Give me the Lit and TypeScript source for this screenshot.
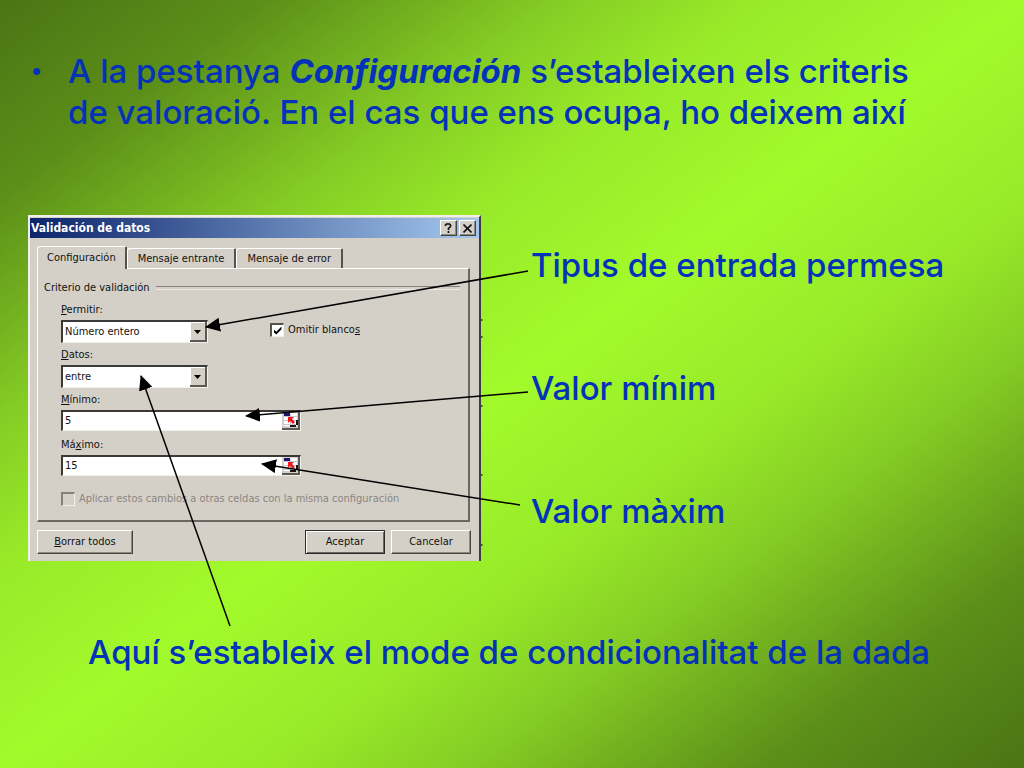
import { LitElement, html, css, svg } from "lit";
import { customElement, property } from "lit/decorators.js";

/** Arrows from the notes to the dialog, measured from the dialog's top left corner. */
const ARROWS = [
  { from: [500, 56], to: [178, 112] },
  { from: [500, 177], to: [218, 201] },
  { from: [492, 290], to: [234, 249] },
  { from: [202, 411], to: [113, 161] },
];

/** Cell marks of the worksheet that show beside the dialog. */
const CELL_MARKS = [105, 122, 191, 260, 330];

@customElement("validation-dialog")
export class ValidationDialog extends LitElement {
  @property() minimum = "5";
  @property() maximum = "15";

  static styles = css`
    :host {
      display: block;
      font: 11px/14px "DejaVu Sans Condensed", "Tahoma", sans-serif;
      color: #111;
    }
    * {
      box-sizing: border-box;
    }
    .dialog {
      background: #d4d0c8;
      border: solid;
      border-width: 2px 2px 0;
      border-color: #f1efea #3c3c46 #f1efea #f1efea;
      padding-bottom: 7px;
    }
    .titlebar {
      display: flex;
      align-items: center;
      gap: 2px;
      height: 20px;
      margin-top: 1px;
      padding: 0 3px 0 1px;
      background: linear-gradient(to right, #0c256c, #a4c8ee);
      color: #fff;
    }
    .title {
      flex: 1;
      margin: 0;
      font: bold 12px/14px "DejaVu Sans Condensed", "Tahoma", sans-serif;
    }
    button {
      font: inherit;
      color: inherit;
      padding: 0;
      background: #d4d0c8;
      border: 1px solid;
      border-color: #fff #484440 #484440 #fff;
      box-shadow: inset -1px -1px #8c8882;
    }
    .caption-button {
      display: grid;
      place-items: center;
      width: 17px;
      height: 16px;
    }
    .tabs {
      display: flex;
      align-items: flex-end;
      padding: 8px 7px 0;
    }
    .tab {
      height: 20px;
      padding: 0 10px;
      border-width: 1px 2px 0 1px;
      border-color: #fff #56524e #fff #fff;
      border-radius: 3px 2px 0 0;
      box-shadow: none;
      white-space: nowrap;
    }
    .tab.active {
      height: 23px;
      margin-bottom: -1px;
      padding: 0 9px;
      position: relative;
      z-index: 1;
    }
    .panel {
      margin: 0 9px 0 7px;
      padding: 12px 8px 14px 6px;
      border: solid;
      border-width: 1px 2px 2px 1px;
      border-color: #fff #6a6662 #6a6662 #fff;
    }
    .group {
      margin: 0;
      font: inherit;
      display: flex;
      align-items: center;
      gap: 6px;
    }
    .group::after {
      content: "";
      flex: 1;
      height: 2px;
      border-top: 1px solid #84807a;
      border-bottom: 1px solid #eceae4;
    }
    .fields {
      display: grid;
      grid-template-columns: 209px 1fr;
      padding: 8px 0 0 17px;
    }
    .field {
      display: flex;
      flex-direction: column;
      gap: 3px;
      height: 45px;
    }
    .wide {
      grid-column: 1 / -1;
      width: 240px;
    }
    .combo,
    .range {
      display: grid;
      height: 23px;
      background: #fff;
      border: solid;
      border-width: 2px 1px 1px 2px;
      border-color: #3c3a38 #f2f0ec #f2f0ec #3c3a38;
    }
    .combo {
      width: 147px;
    }
    .range {
      height: 21px;
      grid-template-columns: 1fr 18px;
    }
    select,
    .text {
      appearance: none;
      min-width: 0;
      width: 100%;
      margin: 0;
      padding: 0 2px;
      border: 0;
      border-radius: 0;
      background: #fff;
      font: inherit;
      color: inherit;
    }
    select,
    .arrow {
      grid-area: 1 / 1;
    }
    .arrow {
      justify-self: end;
      pointer-events: none;
    }
    .range button {
      display: grid;
      border: 0;
      box-shadow: none;
    }
    .check {
      display: flex;
      align-items: center;
      gap: 4px;
    }
    .blank {
      height: 14px;
      margin-top: 20px;
    }
    .box {
      appearance: none;
      display: grid;
      place-items: center;
      width: 14px;
      height: 14px;
      margin: 0;
      background: #fff;
      border: solid;
      border-width: 2px 1px 1px 2px;
      border-color: #56524e #f2f0ec #f2f0ec #56524e;
    }
    .box:disabled {
      background: #d4d0c8;
      border-color: #84807a #f2f0ec #f2f0ec #84807a;
    }
    .box:checked::before {
      content: "";
      width: 8px;
      height: 8px;
      background: #000;
      clip-path: polygon(0 35%, 35% 65%, 100% 0, 100% 35%, 35% 100%, 0 70%);
    }
    .apply {
      padding: 9px 0 0 17px;
      color: #8a8680;
    }
    .actions {
      display: flex;
      gap: 6px;
      padding: 8px 8px 0 7px;
    }
    .actions button {
      width: 80px;
      height: 24px;
    }
    .actions .clear {
      width: 96px;
      margin-right: auto;
    }
    .actions .default {
      border-color: #2e2c2a;
      box-shadow: inset 1px 1px #fff, inset -1px -1px #6a6662;
    }
  `;

  private arrow() {
    return html`<svg class="arrow" width="17" height="20" viewBox="0 0 17 20" aria-hidden="true">
      <path d="M0 0h17v20H0z" fill="#d4d0c8" />
      <path d="M.5 19V.5H16" fill="none" stroke="#fff" />
      <path d="M0 19h16V0" fill="none" stroke="#5c5854" stroke-width="2" />
      <path d="M4 8h7l-3.500 4z" fill="#000" />
    </svg>`;
  }

  private picker(name: string) {
    return html`<button type="button" aria-label=${name}>
      <svg width="18" height="18" viewBox="0 0 18 18" aria-hidden="true">
        <path d="M0 0h18v18H0z" fill="#d4d0c8" />
        <path d="M2 1h13v13H2z" fill="#fff" />
        <path d="M2 4.500h13M2 8.500h13M2 12.500h13M8.500 2v12" stroke="#c8c6d0" />
        <path d="M2 1h6v3H2z" fill="#1c1870" />
        <path d="M6 5h6l-2 2 3 3-2 2-3-3-2 2z" fill="#f01818" />
        <path d="M8 13h6v2H8zM14 8h2v5h-2z" fill="#181418" />
        <path d="M0 17h17V0" fill="none" stroke="#5c5854" stroke-width="2" />
      </svg>
    </button>`;
  }

  render() {
    return html`
      <section class="dialog" role="dialog" aria-labelledby="title">
        <header class="titlebar">
          <h2 class="title" id="title">Validación de datos</h2>
          <button class="caption-button" type="button" aria-label="Ayuda">
            <svg width="9" height="10" viewBox="0 0 9 10" aria-hidden="true">
              <path d="M1.500 3V2l1-1h3l1 1v1.500L4.500 5.500V7M4.500 8v2" fill="none" stroke="#111" stroke-width="1.700" />
            </svg>
          </button>
          <button class="caption-button" type="button" aria-label="Cerrar">
            <svg width="9" height="9" viewBox="0 0 9 9" aria-hidden="true">
              <path d="M.5.5l8 8M8.500.5l-8 8" stroke="#111" stroke-width="1.600" />
            </svg>
          </button>
        </header>
        <nav class="tabs" role="tablist">
          <button class="tab active" type="button" role="tab" aria-selected="true">Configuración</button>
          <button class="tab" type="button" role="tab">Mensaje entrante</button>
          <button class="tab" type="button" role="tab">Mensaje de error</button>
        </nav>
        <div class="panel" role="tabpanel">
          <h3 class="group">Criterio de validación</h3>
          <div class="fields">
            <div class="field">
              <label for="allow"><u>P</u>ermitir:</label>
              <div class="combo">
                <select id="allow"><option>Número entero</option></select>
                ${this.arrow()}
              </div>
            </div>
            <div class="check blank">
              <input class="box" id="blank" type="checkbox" checked />
              <label for="blank">Omitir blanco<u>s</u></label>
            </div>
            <div class="field wide">
              <label for="data"><u>D</u>atos:</label>
              <div class="combo">
                <select id="data"><option>entre</option></select>
                ${this.arrow()}
              </div>
            </div>
            <div class="field wide">
              <label for="min"><u>M</u>ínimo:</label>
              <div class="range">
                <input class="text" id="min" type="text" .value=${this.minimum} />
                ${this.picker("Seleccionar mínimo")}
              </div>
            </div>
            <div class="field wide">
              <label for="max">Má<u>x</u>imo:</label>
              <div class="range">
                <input class="text" id="max" type="text" .value=${this.maximum} />
                ${this.picker("Seleccionar máximo")}
              </div>
            </div>
          </div>
          <div class="check apply">
            <input class="box" id="apply" type="checkbox" disabled />
            <label for="apply">Aplicar estos cambios a otras celdas con la misma configuración</label>
          </div>
        </div>
        <footer class="actions">
          <button class="clear" type="button"><u>B</u>orrar todos</button>
          <button class="default" type="button">Aceptar</button>
          <button type="button">Cancelar</button>
        </footer>
      </section>
    `;
  }
}

@customElement("app-root")
export class AppRoot extends LitElement {
  static styles = css`
    :host {
      display: block;
      min-height: 100vh;
      box-sizing: border-box;
      padding: 51px 28px 40px;
      background: linear-gradient(
        to bottom right,
        #4b7414 0%,
        #5c8f19 13%,
        #84cb24 27%,
        #98ea29 37%,
        #a2fa2b 50%,
        #98ea29 63%,
        #84cb24 73%,
        #5c8f19 87%,
        #4b7414 100%
      );
      color: #0432b8;
      font: 500 33px/41px "Comic Sans MS", "Inter", sans-serif;
    }
    .points {
      margin: 0;
      padding: 0;
      list-style: none;
    }
    .point {
      display: flex;
    }
    .point::before {
      content: "•";
      flex: none;
      width: 40px;
      padding-left: 4px;
      box-sizing: border-box;
      font: 26px/41px "Liberation Sans", sans-serif;
    }
    .example {
      display: flex;
      gap: 50px;
      margin-top: 82px;
    }
    .shot {
      position: relative;
      flex: none;
      width: 453px;
    }
    .arrows {
      position: absolute;
      top: 0;
      left: 0;
      overflow: visible;
      pointer-events: none;
    }
    .notes {
      display: flex;
      flex-direction: column;
      gap: 82px;
      padding-top: 30px;
      white-space: nowrap;
    }
    p {
      margin: 0;
    }
    .mode {
      margin: 71px 0 0 60px;
    }
  `;

  render() {
    return html`
      <ul class="points">
        <li class="point">
          <span>
            A la pestanya <strong><em>Configuración</em></strong> s’estableixen els criteris<br />
            de valoració. En el cas que ens ocupa, ho deixem així
          </span>
        </li>
      </ul>
      <div class="example">
        <div class="shot">
          <validation-dialog></validation-dialog>
          <svg class="arrows" width="453" height="346" aria-hidden="true">
            <defs>
              <marker id="head" markerUnits="userSpaceOnUse" markerWidth="15" markerHeight="14" refX="14" refY="7" orient="auto">
                <path d="M0 0l15 7-15 7z" fill="#000" />
              </marker>
            </defs>
            ${ARROWS.map(
              ({ from, to }) => svg`<line x1=${from[0]} y1=${from[1]} x2=${to[0]} y2=${to[1]}
                stroke="#000" stroke-width="1.500" marker-end="url(#head)" />`
            )}
            ${CELL_MARKS.map((y) => svg`<path d="M453 ${y}h1.500" stroke="#222" stroke-width="1.500" />`)}
          </svg>
        </div>
        <div class="notes">
          <p>Tipus de entrada permesa</p>
          <p>Valor mínim</p>
          <p>Valor màxim</p>
        </div>
      </div>
      <p class="mode">Aquí s’estableix el mode de condicionalitat de la dada</p>
    `;
  }
}
